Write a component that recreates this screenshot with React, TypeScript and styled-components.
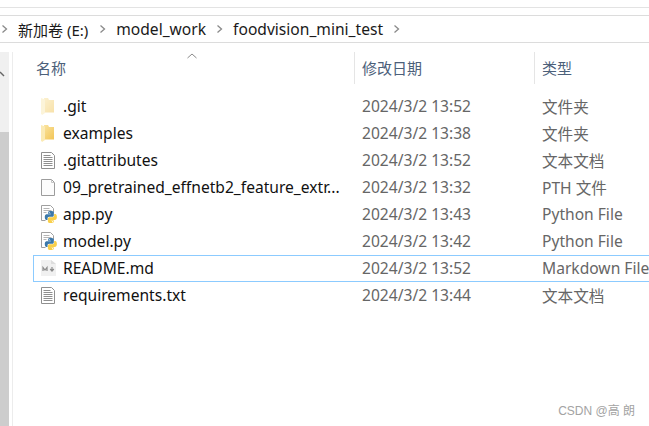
import styled, { createGlobalStyle } from "styled-components";

const GlobalStyle = createGlobalStyle`
  html, body {
    margin: 0;
    padding: 0;
    background: #fff;
    overflow: hidden;
  }
  body {
    font-family: "Noto Sans", "Noto Sans CJK SC", sans-serif;
  }
`;

const Window = styled.div`
  position: relative;
  width: 649px;
  height: 426px;
  overflow: hidden;
  display: flex;
  flex-direction: column;
`;

const TopGap = styled.div`
  height: 7px;
  border-bottom: 1px solid #e3e3e3;
`;

const TitleGap = styled.div`
  height: 7px;
`;

const Breadcrumb = styled.div`
  height: 26px;
  border-top: 1px solid #dcdcdc;
  border-bottom: 1px solid #dcdcdc;
  display: flex;
  align-items: center;
  padding-left: 1px;
  font-size: 15.6px;
  color: #1a1a1a;
`;

const Crumb = styled.span<{ $cjk?: boolean }>`
  margin: 0 10px 0 9px;
  margin-right: ${(p) => (p.$cjk ? "11px" : "10px")};
  white-space: nowrap;
  font-size: ${(p) => (p.$cjk ? "15px" : "inherit")};
`;

const Body = styled.div`
  flex: 1;
  display: flex;
  padding-top: 9px;
`;

const Track = styled.div`
  width: 9px;
  background: #f0f0f0;
  display: flex;
  flex-direction: column;
`;

const TrackArrow = styled.div`
  height: 80px;
  box-sizing: border-box;
  padding-top: 8px;
`;

const Thumb = styled.div`
  flex: 1;
  background: #cdcdcd;
`;

const Main = styled.div`
  flex: 1;
  margin-left: 3px;
  border-left: 1px solid #ececec;
  min-width: 0;
`;

const Header = styled.div`
  position: relative;
  height: 32px;
  display: grid;
  grid-template-columns: 341px 180px 1fr;
  font-size: 15px;
  color: #4c607a;
  margin-bottom: 9px;
`;

const HeaderCell = styled.div<{ $first?: boolean }>`
  display: flex;
  align-items: center;
  padding-left: ${(p) => (p.$first ? "23px" : "7px")};
  padding-bottom: 1px;
  border-left: ${(p) => (p.$first ? "none" : "1px solid #e5e5e5")};
`;

const SortCaret = styled.svg`
  position: absolute;
  left: 174px;
  top: 1px;
`;

const Row = styled.div<{ $selected?: boolean }>`
  height: 27px;
  box-sizing: border-box;
  margin-left: 20px;
  display: grid;
  grid-template-columns: 321px 180px 1fr;
  align-items: center;
  border-width: 1px 0 1px 1px;
  border-style: solid;
  border-color: ${(p) => (p.$selected ? "#8ccbff" : "transparent")};
  font-size: 15.6px;
  white-space: nowrap;
`;

const NameCell = styled.div`
  display: flex;
  align-items: center;
  color: #111;
  padding-left: 7px;
  padding-bottom: 1px;
`;

const IconSlot = styled.span`
  width: 16px;
  height: 16px;
  display: flex;
  align-items: center;
  margin-right: 6px;
  flex: none;
`;

const MetaCell = styled.div`
  color: #666;
  padding-left: 7px;
  padding-bottom: 1px;
  overflow: hidden;
`;

const Watermark = styled.div`
  position: absolute;
  right: 14px;
  bottom: 8px;
  font-size: 12px;
  color: #a3a3a3;
  font-family: "Liberation Sans", "Noto Sans CJK SC", sans-serif;
`;

const Chevron = () => (
  <svg width="8" height="10" viewBox="0 0 8 10" fill="none">
    <path d="M1.500 1.500 5.500 5 1.500 8.500" stroke="#8a8a8a" strokeWidth="1.3" />
  </svg>
);

const FolderIcon = ({ faded }: { faded?: boolean }) => (
  <svg width="13" height="17" viewBox="0 0 13 17" opacity={faded ? 0.5 : 1}>
    <defs>
      <linearGradient id="folderBack" x1="0" y1="0" x2="1" y2="1">
        <stop offset="0" stopColor="#fbe7a8" />
        <stop offset="1" stopColor="#f2c557" />
      </linearGradient>
    </defs>
    <path d="M0 0h7l1 2h5v12.500H3V0z" fill="url(#folderBack)" />
    <path d="M0 0 4 1.500V15L1 17 0 15.500z" fill="#fbeab4" />
  </svg>
);

const TextIcon = () => (
  <svg width="16" height="17" viewBox="0 0 16 17" fill="none">
    <path d="M.5 .5h10l3 3v13H.5z" fill="#fff" stroke="#8f8f8f" />
    <path d="M2.500 3.500h7M2.500 5.500h9M2.500 7.500h9M2.500 9.500h9M2.500 11.500h9M2.500 13.500h9" stroke="#8f8f8f" />
  </svg>
);

const BlankIcon = () => (
  <svg width="16" height="17" viewBox="0 0 16 17" fill="none">
    <path d="M.5 .5h10l3 3v13H.5z" fill="#fcfcfc" stroke="#9c9c9c" />
    <path d="M10.500 .5v3h3" stroke="#c4c4c4" />
  </svg>
);

const PY_LOGO =
  "M54.900 0C26.800 0 28.600 12.200 28.600 12.200v12.600h26.800v3.800H17.900S0 26.500 0 54.800s15.700 27.300 15.700 27.300H25V69s-.5-15.700 15.400-15.700H67s14.900.2 14.900-14.400V14.800S84.200 0 54.900 0zM40.200 8.500a4.800 4.800 0 1 1 0 9.600 4.800 4.800 0 0 1 0-9.600z";

const PythonIcon = () => (
  <svg width="16" height="18" viewBox="0 0 16 18" fill="none">
    <path d="M.5 .5h9l3 3v5M.5 .5v15h4" stroke="#a0a0a0" />
    <path d="M2.500 3.500h6M2.500 5.500h8M2.500 7.500h3" stroke="#b5b5b5" />
    <g transform="translate(3.800 6) scale(.11)">
      <path d={PY_LOGO} fill="#3b78aa" />
      <path d={PY_LOGO} fill="#f9cf4a" transform="rotate(180 55 55)" />
    </g>
  </svg>
);

const MarkdownIcon = () => (
  <svg width="16" height="18" viewBox="0 0 16 18" fill="none">
    <path d="M0 1h10l5 4v12H0z" fill="#f0f0f0" />
    <path d="M10 1v4h5z" fill="#dddddd" />
    <path d="M2 12V8.500l2 2.500 2-2.500V12" stroke="#8a8a8a" strokeWidth="1.200" />
    <path d="M11 8v3.500M9.200 10 11 12l1.800-2" stroke="#8a8a8a" strokeWidth="1.200" />
  </svg>
);

type FileKind = "folder" | "folderFaded" | "text" | "blank" | "python" | "markdown";

const files: { name: string; date: string; type: string; kind: FileKind; selected?: boolean }[] = [
  { name: ".git", date: "2024/3/2 13:52", type: "文件夹", kind: "folderFaded" },
  { name: "examples", date: "2024/3/2 13:38", type: "文件夹", kind: "folder" },
  { name: ".gitattributes", date: "2024/3/2 13:52", type: "文本文档", kind: "text" },
  { name: "09_pretrained_effnetb2_feature_extr...", date: "2024/3/2 13:32", type: "PTH 文件", kind: "blank" },
  { name: "app.py", date: "2024/3/2 13:43", type: "Python File", kind: "python" },
  { name: "model.py", date: "2024/3/2 13:42", type: "Python File", kind: "python" },
  { name: "README.md", date: "2024/3/2 13:52", type: "Markdown File", kind: "markdown", selected: true },
  { name: "requirements.txt", date: "2024/3/2 13:44", type: "文本文档", kind: "text" },
];

const renderIcon = (kind: FileKind) => {
  if (kind === "folder") return <FolderIcon />;
  if (kind === "folderFaded") return <FolderIcon faded />;
  if (kind === "text") return <TextIcon />;
  if (kind === "blank") return <BlankIcon />;
  if (kind === "python") return <PythonIcon />;
  return <MarkdownIcon />;
};

const App = () => {
  return (
    <Window>
      <GlobalStyle />
      <TopGap />
      <TitleGap />
      <Breadcrumb>
        <Chevron />
        <Crumb $cjk>新加卷 (E:)</Crumb>
        <Chevron />
        <Crumb>model_work</Crumb>
        <Chevron />
        <Crumb>foodvision_mini_test</Crumb>
        <Chevron />
      </Breadcrumb>
      <Body>
        <Track>
          <TrackArrow>
            <svg width="6" height="6" viewBox="0 0 6 6" fill="none">
              <path d="M0 1 4 5" stroke="#666" strokeWidth="1.500" />
            </svg>
          </TrackArrow>
          <Thumb />
        </Track>
        <Main>
          <Header>
            <HeaderCell $first>名称</HeaderCell>
            <HeaderCell>修改日期</HeaderCell>
            <HeaderCell>类型</HeaderCell>
            <SortCaret width="10" height="6" viewBox="0 0 10 6" fill="none">
              <path d="M.5 5 5 1l4.500 4" stroke="#8a8a8a" />
            </SortCaret>
          </Header>
          {files.map((file) => (
            <Row key={file.name} $selected={file.selected}>
              <NameCell>
                <IconSlot>{renderIcon(file.kind)}</IconSlot>
                {file.name}
              </NameCell>
              <MetaCell>{file.date}</MetaCell>
              <MetaCell>{file.type}</MetaCell>
            </Row>
          ))}
        </Main>
      </Body>
      <Watermark>CSDN @高 朗</Watermark>
    </Window>
  );
};

export default App;
